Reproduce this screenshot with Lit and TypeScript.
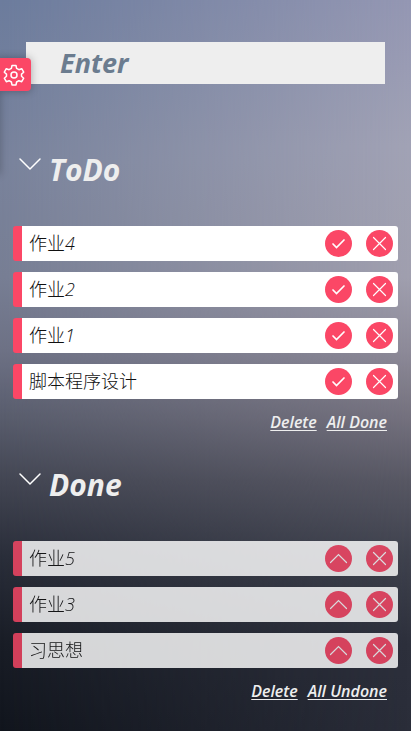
import { LitElement, html, css, svg } from "lit";
import { customElement, property, state } from "lit/decorators.js";

type Task = { id: number; text: string; done: boolean };

const icons = {
  check: svg`<path d="M8 14l3.5 3.5L19 10" />`,
  up: svg`<path d="M5.500 17.500l8-8 8 8" />`,
  cross: svg`<path d="M7.500 7.500l12 12M19.500 7.500l-12 12" />`,
};

@customElement("todo-item")
class TodoItem extends LitElement {
  @property({ attribute: false }) task!: Task;

  static styles = css`
    :host {
      display: block;
    }
    .item {
      display: flex;
      align-items: center;
      gap: 14px;
      box-sizing: border-box;
      height: 35px;
      padding: 0 5px 0 7px;
      border-left: 9px solid #fb4766;
      border-radius: 3px;
      background: #fff;
    }
    .done {
      opacity: 0.82;
    }
    .text {
      flex: 1;
      padding-bottom: 2px;
      color: #111;
      font: 300 18px/26px "Open Sans", "Noto Sans CJK SC", sans-serif;
    }
    .digits {
      font-style: italic;
    }
    .round {
      width: 27px;
      height: 27px;
      padding: 0;
      border: 0;
      border-radius: 50%;
      background: #fb4766;
      cursor: pointer;
    }
    .icon {
      display: block;
      width: 27px;
      height: 27px;
      fill: none;
      stroke: #fff;
      stroke-width: 1.2;
      stroke-linecap: round;
    }
    .bold {
      stroke-width: 1.7;
    }
  `;

  private emit(name: string) {
    this.dispatchEvent(new CustomEvent(name, { detail: this.task.id }));
  }

  render() {
    const { text, done } = this.task;
    return html`<div class="item ${done ? "done" : ""}">
      <span class="text">${text.split(/(\d+)/).map((part) =>
        /\d/.test(part) ? html`<span class="digits">${part}</span>` : part
      )}</span>
      <button class="round" aria-label=${done ? "Undo" : "Done"} @click=${() => this.emit("toggle-task")}>
        <svg class="icon ${done ? "" : "bold"}" viewBox="0 0 27 27">${done ? icons.up : icons.check}</svg>
      </button>
      <button class="round" aria-label="Delete" @click=${() => this.emit("remove-task")}>
        <svg class="icon" viewBox="0 0 27 27">${icons.cross}</svg>
      </button>
    </div>`;
  }
}

@customElement("app-root")
class AppRoot extends LitElement {
  @state() private tasks: Task[] = [
    { id: 7, text: "作业4", done: false },
    { id: 6, text: "作业2", done: false },
    { id: 5, text: "作业1", done: false },
    { id: 4, text: "脚本程序设计", done: false },
    { id: 3, text: "作业5", done: true },
    { id: 2, text: "作业3", done: true },
    { id: 1, text: "习思想", done: true },
  ];

  static styles = css`
    :host {
      display: block;
      font-family: "Open Sans", "Noto Sans CJK SC", sans-serif;
    }
    .page {
      position: relative;
      overflow: hidden;
      margin-right: 2px;
      padding: 42px 13px 28px;
      background: linear-gradient(
        #6c7c9d 0%,
        #79839c 22%,
        #777e94 38%,
        #6d7185 48%,
        #595d6d 57%,
        #424552 66%,
        #2a2e3a 76%,
        #191d26 88%,
        #11151d 100%
      );
    }
    .page::before {
      content: "";
      position: absolute;
      inset: 0;
      background: linear-gradient(
        #9497b3 0%,
        #a1a2b5 20%,
        #a09fae 38%,
        #8d8a98 48%,
        #74717e 57%,
        #575763 66%,
        #3f424e 76%,
        #2d303c 88%,
        #2a2d39 100%
      );
      mask-image: linear-gradient(to right, transparent, #000);
    }
    .content {
      position: relative;
    }
    .entry {
      margin: 0 13px 66px;
    }
    .field {
      display: block;
      box-sizing: border-box;
      width: 100%;
      height: 42px;
      padding: 0 34px;
      border: 0;
      border-radius: 0;
      background: #eee;
      color: #6b7c8f;
      font: italic 700 27px/42px "Open Sans", "Noto Sans CJK SC", sans-serif;
    }
    .field::placeholder {
      color: #6b7c8f;
      opacity: 1;
    }
    .heading {
      display: flex;
      gap: 8px;
      margin: 0 0 36px;
      padding-left: 6px;
      color: #eee;
      font: italic 700 30px/40px "Open Sans", sans-serif;
    }
    .chevron {
      width: 22px;
      height: 28px;
      fill: none;
      stroke: #fff;
      stroke-width: 1.5;
      stroke-linecap: round;
    }
    .list {
      display: grid;
      gap: 11px;
      margin: 0;
      padding: 0;
      list-style: none;
    }
    .actions {
      display: flex;
      justify-content: flex-end;
      gap: 10px;
      margin-top: 11px;
      padding-right: 11px;
    }
    .section + .section {
      margin-top: 31px;
    }
    .link {
      color: #eee;
      font: italic 600 16px/24px "Open Sans", sans-serif;
      text-underline-offset: 2px;
    }
    .drawer {
      position: absolute;
      top: 58px;
      left: -200px;
      width: 200px;
      height: 116px;
      box-shadow: 0 0 8px rgba(0, 0, 0, 0.25);
    }
    .tab {
      position: absolute;
      top: 0;
      left: 100%;
      width: 31px;
      height: 33px;
      padding: 0;
      border: 0;
      border-radius: 0 4px 4px 0;
      background: #fb4766;
      box-shadow: 0 0 8px rgba(0, 0, 0, 0.3);
      cursor: pointer;
    }
    .gear {
      display: block;
      width: 24px;
      height: 24px;
      margin-left: 2px;
      fill: none;
      stroke: #fff;
      stroke-width: 1.5;
      stroke-linejoin: round;
    }
  `;

  private toggle(id: number) {
    this.tasks = this.tasks.map((t) => (t.id === id ? { ...t, done: !t.done } : t));
  }

  private remove(id: number) {
    this.tasks = this.tasks.filter((t) => t.id !== id);
  }

  private clear(e: Event, done: boolean) {
    e.preventDefault();
    this.tasks = this.tasks.filter((t) => t.done !== done);
  }

  private moveAll(e: Event, done: boolean) {
    e.preventDefault();
    this.tasks = this.tasks.map((t) => ({ ...t, done: !done }));
  }

  private add(e: KeyboardEvent) {
    const field = e.target as HTMLInputElement;
    const text = field.value.trim();
    if (e.key !== "Enter" || !text) return;
    this.tasks = [{ id: Date.now(), text, done: false }, ...this.tasks];
    field.value = "";
  }

  private section(title: string, done: boolean, moveLabel: string) {
    return html`<section class="section">
      <h2 class="heading">
        <svg class="chevron" viewBox="0 0 22 28" aria-hidden="true"><path d="M1 9l10 10L21 9" /></svg>
        ${title}
      </h2>
      <ul class="list">
        ${this.tasks.filter((t) => t.done === done).map(
          (t) => html`<li>
            <todo-item
              .task=${t}
              @toggle-task=${() => this.toggle(t.id)}
              @remove-task=${() => this.remove(t.id)}
            ></todo-item>
          </li>`
        )}
      </ul>
      <div class="actions">
        <a class="link" href="#" @click=${(e: Event) => this.clear(e, done)}>Delete</a>
        <a class="link" href="#" @click=${(e: Event) => this.moveAll(e, done)}>${moveLabel}</a>
      </div>
    </section>`;
  }

  render() {
    return html`<main class="page">
      <div class="content">
        <div class="entry">
          <input class="field" type="text" placeholder="Enter" aria-label="New task" @keydown=${this.add} />
        </div>
        ${this.section("ToDo", false, "All Done")} ${this.section("Done", true, "All Undone")}
      </div>
      <aside class="drawer">
        <button class="tab" aria-label="Settings">
          <svg class="gear" viewBox="0 0 24 24">
            <circle cx="12" cy="12" r="3" />
            <path
              d="M10 2.5h4l.6 2.9 2.3 1.3 2.8-1 2 3.5-2.2 1.9v2.2l2.2 1.9-2 3.5-2.8-1-2.3 1.3-.6 2.9h-4l-.6-2.9-2.3-1.3-2.8 1-2-3.5 2.2-1.9v-2.2l-2.2-1.9 2-3.5 2.8 1 2.3-1.3z"
            />
          </svg>
        </button>
      </aside>
    </main>`;
  }
}
